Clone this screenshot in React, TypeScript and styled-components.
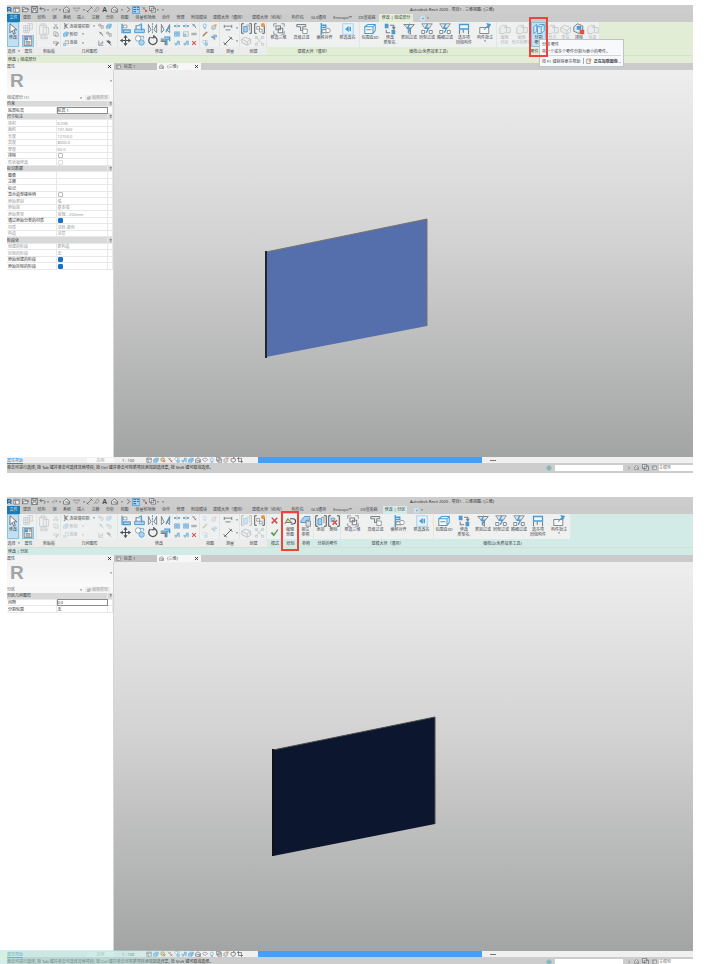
import React, { useId } from "react";
import styled, { createGlobalStyle, css } from "styled-components";

const GlobalStyle = createGlobalStyle`
  * { box-sizing: border-box; }
  body { margin: 0; background: #fff; }
  button, input, select, table {
    font: inherit; color: inherit; margin: 0; padding: 0; border: 0; background: none; border-radius: 0;
  }
`;

const B = "#4b9bd0";
const L = "#a9d3ee";
const G = "#7b7f82";
const D = "#4c5054";
const R = "#e05045";

/* ---------- icons, drawn on a 16 x 16 grid ---------- */

const drawings: Record<string, React.ReactNode> = {
  cursor: <path d="M4 1v12l3-3 2 5 2-1-2-5h4z" fill="#fff" stroke={D} />,
  grid: <path d="M1 4h9v11H1zM4 4v11M7 4v11M1 8h9M1 12h9M7 1h8v9h-5M11 1v9" fill="none" stroke={G} />,
  props: <><path d="M2 1h12v14H2z" fill="#fff" stroke={D} /><path d="M3 2h5v5H3z" fill={B} /><path d="M9 3h4M9 5h4M4 9h8M4 11h8M4 13h8" stroke={D} /></>,
  paste: <path d="M2 3h9v12H2zM4 1h5v3H4zM7 6h7v9H7z" fill="#eee" stroke={G} />,
  cut: <path d="M3 2l9 10M12 2L3 12M2 12h3v3H2zM10 12h3v3h-3z" fill="none" stroke={G} strokeWidth="1.5" />,
  copy: <path d="M2 2h7l2 2v8H2zM6 5h6l2 2v8H6z" fill="#fff" stroke={G} strokeWidth="1.3" />,
  brush: <><path d="M1 4h9v5H1z" fill="#ddd" stroke={G} /><path d="M7 14l7-9 1 2-6 8z" fill="#d1a04e" stroke={D} /></>,
  scissors: <path d="M2 1h3v14H2M5 8l9-6M5 7l9 7M8 3v10" fill="none" stroke={D} strokeWidth="1.6" />,
  cubeBlue: <path d="M1 8l5-5h8v6l-4 5H1zM1 8h9v6M10 8l4-5" fill={L} stroke={B} strokeWidth="1.4" />,
  cubes: <><path d="M1 9h7v6H1z" fill={L} stroke={B} /><path d="M6 2h9v8H9M6 2v5" fill="none" stroke={G} strokeWidth="1.5" /></>,
  dotted: <path d="M2 3h5v5H2zM8 7h6v7H8z" fill="#e7e7e7" stroke={G} strokeWidth="1.4" />,
  hammer: <path d="M2 3l6-1 4 4-3 3zM8 7l6 7" fill={G} stroke={D} strokeWidth="2" />,
  splitface: <><path d="M2 2v12h12" fill="none" stroke={D} strokeWidth="1.5" /><path d="M5 11L13 3v6z" fill="#e8a55e" stroke={B} /></>,
  align: <><path d="M3 1v14" stroke={B} strokeWidth="2" /><path d="M5 3h5v4H5z" fill="#fff" stroke={G} /><path d="M5 10h10v4H5z" fill={L} stroke={B} strokeWidth="1.5" /></>,
  offset: <><path d="M3 9V4h8v5" fill="#fff" stroke={G} strokeWidth="1.5" /><path d="M1 9h14v5H1zM7 3l4-2v10" fill={L} stroke={B} strokeWidth="1.4" /></>,
  mirror: <><path d="M2 2v12l4-4zM14 2v12l-4-4z" fill="#e5eef4" stroke={G} strokeWidth="1.3" /><path d="M8 0v16" stroke={B} strokeDasharray="3 1" strokeWidth="1.3" /></>,
  mirrorDraw: <><path d="M2 2v12l4-4zM14 2v12l-4-4z" fill="#e5eef4" stroke={G} strokeWidth="1.3" /><path d="M8 12l6-9 1 2-6 9z" fill={B} /></>,
  move: <><path d="M8 1v14M1 8h14" stroke={D} strokeWidth="1.6" /><path d="M8 0l3 4H5zM8 16l3-4H5zM0 8l4-3v6zM16 8l-4-3v6z" fill={D} /></>,
  copyBlue: <><circle cx="6" cy="5" r="4" fill="#fff" stroke={G} /><circle cx="11" cy="11" r="4" fill={L} stroke={B} /><path d="M8 2h6v4" fill="none" stroke={B} /></>,
  rotate: <path d="M5 3a6 6 0 1 0 5-1M10 0v4H6" fill="none" stroke={D} strokeWidth="1.8" />,
  trim: <><path d="M1 9h7v6" fill="none" stroke={G} strokeWidth="2.5" /><path d="M1 6h9v9M10 6h5M6 3h8v6" fill="none" stroke={B} strokeWidth="2" /></>,
  split: <><path d="M0 8h6M10 8h6" stroke={B} strokeWidth="4" /><path d="M8 2v12" stroke={D} strokeDasharray="2 1" /></>,
  array: <path d="M1 2h6v5H1zM9 2h6v5H9zM1 9h6v5H1zM9 9h6v5H9z" fill={L} stroke={B} strokeWidth="1.3" />,
  scale: <><path d="M1 2h13v12H1z" fill="none" stroke={G} /><path d="M1 8h7v6H1z" fill={L} stroke={B} /></>,
  trimOne: <><path d="M1 9h8V3h5v11" fill={L} stroke={B} strokeWidth="1.6" /><path d="M2 13h6" stroke={G} strokeWidth="2" /></>,
  pin: <path d="M3 2l4 5M6 3l7 7M5 9l4-5M9 9l5 5" stroke={G} strokeWidth="2" />,
  unpin: <><path d="M3 2l9 9M5 8l4-5" stroke={G} strokeWidth="2" /><path d="M9 9l5 5M14 9l-5 5" stroke={R} strokeWidth="2" /></>,
  link: <path d="M2 6h5v4H2zM9 6h5v4H9z" fill="none" stroke={G} strokeWidth="1.6" />,
  cross: <path d="M2 3l2-1 4 4 4-4 2 2-4 4 4 4-2 2-4-4-4 4-2-2 4-4z" fill={R} />,
  check: <path d="M1 9l3-2 3 3 6-8 2 1-8 12z" fill="#5a9f52" />,
  bulb: <path d="M5 10a4 4 0 1 1 5 0v3H5zM6 15h4" fill="#eaf4fb" stroke={B} strokeWidth="1.5" />,
  pencil: <path d="M2 14l2-5 8-7 2 2-8 8z" fill="#d9a45b" stroke={D} />,
  note: <><path d="M2 3h9v12H2z" fill="#fff" stroke={D} strokeWidth="1.4" /><path d="M6 9l6-8 3 2-6 7z" fill="#e8913f" /></>,
  box: <><path d="M2 6l4-3 6 2v7l-4 3-6-2z" fill="#cfd4d7" stroke={G} /><path d="M9 1h6v5H9z" fill="#e89c62" /></>,
  measure: <path d="M2 3v5M14 3v5M2 5h12M4 11h8" fill="none" stroke={G} strokeWidth="1.5" />,
  diag: <path d="M2 14L14 2M1 10l5 5M10 1l5 5" fill="none" stroke={D} strokeWidth="1.4" />,
  brackets: <><path d="M4 1H1v14h3M12 1h3v14h-3" fill="none" stroke={D} strokeWidth="1.3" /><path d="M4 5h5v8H4z" fill={L} stroke={B} strokeWidth="1.3" /><path d="M8 3h4v8" fill="none" stroke={G} /></>,
  bracketsNew: <><path d="M4 1H1v14h3M12 4h3v11h-3" fill="none" stroke={D} strokeWidth="1.3" /><path d="M4 5h4v4H4zM8 9h4v4H8z" fill="#fff" stroke={G} /><circle cx="13" cy="3" r="3" fill="#e9974c" /></>,
  bracketsDel: <><path d="M4 1H1v14h3M12 1h3v14h-3" fill="none" stroke={D} strokeWidth="1.3" /><path d="M4 4h5v5H4z" fill={L} stroke={B} /><path d="M6 7l6 6M12 7l-6 6" stroke={R} strokeWidth="2" /></>,
  solid: <path d="M1 6l5-3 8 3v6l-5 3-8-4zM1 6l8 4 5-4M9 10v5" fill="#e6e6e6" stroke={G} strokeWidth="1.3" />,
  nodes: <path d="M3 3l9 10M12 3L3 13M2 2h3v3H2zM11 2h3v3h-3zM2 12h3v3H2zM11 12h3v3h-3z" fill="#eee" stroke={G} />,
  frame3d: <><path d="M1 5V1h4M11 1h4v4M15 11v4h-4M5 15H1v-4" fill="none" stroke={G} /><path d="M4 4h6v5H4zM7 7h6v6H7z" fill="#fff" stroke={G} strokeWidth="1.4" /></>,
  filter: <><path d="M1 2h12v3H9v5H6V5H1z" fill="#dce7ee" stroke={G} strokeWidth="1.3" /><path d="M9 8h6v6H9z" fill="#fff" stroke={G} /></>,
  offsetAlign: <><path d="M3 0v16M4 3h5v3H4" fill="none" stroke={B} strokeWidth="1.8" /><path d="M4 9h7v4H4z" fill="#fff" stroke={G} strokeWidth="1.3" /><circle cx="12" cy="10" r="3" fill="#fff" stroke={G} /></>,
  rename: <><path d="M1 1h14v14H1z" fill="#e7f3fb" stroke={L} strokeWidth="1.4" /><path d="M4 8l5-4v8zM10 5h2v6h-2" fill={B} /></>,
  bbox: <path d="M1 5l4-3h10v8l-3 4H1zM1 5h11v9M12 5l3-3M3 9h7" fill="#f5fafd" stroke={B} strokeWidth="1.4" />,
  edit: <><path d="M1 1h5v6H1zM10 9h5v6h-5z" fill={B} /><path d="M8 3h5v4M11 5l2 3 2-3M3 9v4h5" fill="none" stroke={G} strokeWidth="1.4" /></>,
  funnel: <><path d="M1 2h14l-5 6v7l-3-2V8z" fill="#e1e6e9" stroke={G} strokeWidth="1.2" /><path d="M9 1L6 7h4l-3 6" fill="none" stroke={B} strokeWidth="1.8" /></>,
  funnelMulti: <><path d="M1 1h14l-4 6H5z" fill="#dfe5e9" stroke={G} /><path d="M9 1L6 7h4l-3 6" fill="none" stroke={B} strokeWidth="1.8" /><path d="M1 10h4v4H1zM11 10h4v4h-4z" fill="#fff" stroke={G} strokeWidth="1.2" /></>,
  multi: <><path d="M2 9v6M14 9v6M7 9v4" stroke={G} strokeWidth="1.5" /><path d="M2 2h12v6H2z" fill="#eef7fd" stroke={B} strokeWidth="1.7" /></>,
  annotate: <><path d="M1 6h12v8H1z" fill="#f8f8f8" stroke={G} strokeWidth="1.2" /><path d="M7 9l6-7M11 1l4 1-2 4z" fill={B} stroke={B} strokeWidth="1.5" /></>,
  parts: <path d="M1 5l4-3v9l-4 3zM6 5h5v9H6zM6 5l3-3h6v8l-4 4M11 5l4-3" fill="#dcebf4" stroke={B} strokeWidth="1.2" />,
  partsGray: <path d="M1 6l4-3h5v8l-3 3H1zM7 6h8v7H9M7 6l3-3" fill="#e5e5e5" stroke={G} strokeWidth="1.2" />,
  partsRed: <><path d="M1 5l5-4 7 3v6l-5 4-7-3z" fill="#dde9ef" stroke={G} strokeWidth="1.3" /><path d="M5 4h6v5H5z" fill={B} /><path d="M9 9h6v6H9z" fill={R} /></>,
  sketch: <><path d="M1 12l4-7 5 5H3" fill="#f4d488" stroke={G} strokeWidth="1.4" /><path d="M8 5h4a3 3 0 0 1 0 7H9" fill="none" stroke={D} strokeWidth="1.5" /></>,
  intersect: <><path d="M1 8l5-6h7v5H8v3H1z" fill={L} stroke={B} strokeWidth="1.3" /><path d="M8 8h6v7H8z" fill="#ddd" stroke={G} /></>,
  doc: <path d="M2 3h12v11H2zM2 6h12M6 6v8" fill="#fff" stroke={D} strokeWidth="1.4" />,
  open: <path d="M1 13V3h5l1 2h6v3M1 13l3-6h11l-3 6z" fill="#eee" stroke={D} strokeWidth="1.4" />,
  save: <path d="M1 1h14v14H1zM4 1v5h8V1M4 15V9h8v6" fill="#f3f3f3" stroke={D} strokeWidth="1.5" />,
  undo: <path d="M5 2L2 6l4 3M2 6h8c5 0 5 6 1 7" fill="none" stroke={D} strokeWidth="1.6" />,
  redo: <path d="M11 4l3 3-4 3M14 7H6c-4 0-4 5 0 5" fill="none" stroke={G} strokeWidth="1.2" />,
  home: <path d="M1 7l7-5 7 5v7H1zM4 9h8v5" fill="#eee" stroke={D} strokeWidth="1.5" />,
  tag: <path d="M2 14L10 2l4 3-4 7-5-1" fill="none" stroke={G} strokeWidth="1.3" />,
  section: <path d="M5 2l6 6-6 6" fill="none" stroke={D} strokeWidth="1.7" />,
  lines: <path d="M1 3h6M1 8h6M1 13h6M9 3h6M9 8h4" stroke="#28598a" strokeWidth="2" />,
  windows: <path d="M1 1h10v9H1zM5 5h10v9H5z" fill="#eee" stroke={D} strokeWidth="1.4" />,
  globe: <><circle cx="8" cy="8" r="6" fill={L} stroke={B} /><path d="M8 2v12M2 8h12" stroke="#6ca665" strokeWidth="2" /></>,
  sun: <><circle cx="7" cy="7" r="5" fill="#f2d37f" stroke={D} /><path d="M9 9l5 5M14 9l-5 5" stroke={R} strokeWidth="2" /></>,
  crop: <path d="M4 0v12h12M0 4h12v12" fill="none" stroke={D} strokeWidth="1.6" />,
  glasses: <path d="M1 7c3-5 11-5 14 0l-7 5z" fill="none" stroke={G} strokeWidth="1.6" />,
};

const Glyph = styled.svg<{ $s: number }>`
  width: ${(p) => p.$s}px;
  height: ${(p) => p.$s}px;
  flex: none;
  display: block;
`;

const Icon = ({ name, size = 6 }: { name: string; size?: number }) => (
  <Glyph $s={size} viewBox="0 0 16 16" aria-hidden="true">{drawings[name]}</Glyph>
);

const Caret = () => (
  <Glyph $s={2} viewBox="0 0 8 8" aria-hidden="true"><path d="M0 2h8L4 7z" fill={D} /></Glyph>
);

/* ---------- window shell ---------- */

const Page = styled.main`
  height: 100vh;
  overflow: hidden;
  padding: 5px 14px 0 7px;
  display: flex;
  flex-direction: column;
  gap: 24px;
  font: 4px/5px "Noto Sans", "Noto Sans CJK SC", sans-serif;
  color: #43474a;
`;

const AppWindow = styled.section`
  flex: none;
  position: relative;
`;

const TitleBar = styled.header`
  display: flex;
  height: 9px;
  background: #cdcdcd;
  align-items: center;
`;

const QuickButton = styled.button<{ $w: number; $on?: boolean }>`
  width: ${(p) => p.$w}px;
  height: 8px;
  flex: none;
  display: flex;
  align-items: center;
  justify-content: center;
  font-size: 7px;
  line-height: 8px;
  font-weight: 600;
  ${(p) => p.$on && css`background: #a9d1f0; outline: 1px solid #6aa9d8; outline-offset: -1px;`}
`;

const WindowTitle = styled.span`
  margin-left: 245px;
  white-space: nowrap;
  color: #333;
`;

const TabRow = styled.nav`
  display: flex;
  height: 8px;
  background: #cbcbcb;
`;

const RibbonTab = styled.button<{ $w: number; $bg?: string; $file?: boolean }>`
  width: ${(p) => p.$w}px;
  flex: none;
  white-space: nowrap;
  text-align: center;
  line-height: 8px;
  background: ${(p) => (p.$file ? "#1a7ab8" : p.$bg || "transparent")};
  color: ${(p) => (p.$file ? "#d9edf8" : "#43474a")};
  display: flex;
  align-items: center;
  justify-content: center;
  gap: 2px;
`;

const Ribbon = styled.div<{ $tint: string }>`
  display: flex;
  height: 33px;
  background: ${(p) => p.$tint};
`;

const GroupBox = styled.section<{ $w: number }>`
  width: ${(p) => p.$w}px;
  flex: none;
  display: flex;
  flex-direction: column;
  position: relative;
`;

const Tools = styled.div`
  height: 25px;
  display: flex;
  background: #eff1f1;
  border-right: 1px solid #e2e5e5;
`;

const GroupLabel = styled.div<{ $tint?: string; $right?: number }>`
  height: 8px;
  line-height: 7px;
  display: flex;
  align-items: center;
  justify-content: center;
  gap: 2px;
  white-space: nowrap;
  padding-right: ${(p) => p.$right || 0}px;
  background: ${(p) => p.$tint || "#ececec"};
`;

const ToolButton = styled.button<{ $w: number; $dim?: boolean; $on?: boolean }>`
  width: ${(p) => p.$w}px;
  height: 25px;
  flex: none;
  position: relative;
  display: flex;
  flex-direction: column;
  align-items: center;
  padding-top: 1px;
  line-height: 5px;
  white-space: nowrap;
  ${(p) => p.$on && css`background: #c0e0f3; outline: 1px solid #8dc1e2; outline-offset: -1px;`}
  > svg, > span { opacity: ${(p) => (p.$dim ? 0.35 : 1)}; }
`;

const Column = styled.div<{ $w: number }>`
  width: ${(p) => p.$w}px;
  flex: none;
  display: flex;
  flex-direction: column;
  justify-content: space-around;
  align-items: center;
`;

const SmallButton = styled.button<{ $dim?: boolean; $on?: boolean }>`
  display: flex;
  align-items: center;
  gap: 1px;
  white-space: nowrap;
  opacity: ${(p) => (p.$dim ? 0.4 : 1)};
  ${(p) => p.$on && css`background: #c0e0f3; outline: 1px solid #8dc1e2;`}
`;

const SmallText = styled.span<{ $w: number }>`
  width: ${(p) => p.$w}px;
  text-align: left;
`;

const RedFrame = styled.span<{ $top: number }>`
  position: absolute;
  z-index: 5;
  top: ${(p) => p.$top}px;
  left: -2px;
  right: -2px;
  height: 40px;
  border: 2px solid #f04238;
`;

const Tooltip = styled.div`
  position: absolute;
  z-index: 4;
  left: 42px;
  top: 17px;
  width: 85px;
  height: 28px;
  padding: 2px;
  background: #f8f9fb;
  border: 1px solid #bfc3c9;
  white-space: nowrap;
  display: flex;
  flex-direction: column;
  justify-content: space-between;
`;

const TooltipFoot = styled.div`
  display: flex;
  align-items: center;
  gap: 2px;
  border-top: 1px solid #d3d5da;
  padding-top: 2px;
`;

const TooltipNote = styled.span`
  border-left: 1px solid #aaa;
  margin-left: auto;
  padding-left: 2px;
  display: flex;
  align-items: center;
  gap: 2px;
  font-weight: 600;
`;

const OptionsBar = styled.div<{ $tint: string }>`
  height: 8px;
  line-height: 7px;
  padding-left: 1px;
  background: ${(p) => p.$tint};
  border-top: 1px solid #d5dfd2;
  color: #333;
`;

/* ---------- body ---------- */

const Body = styled.div<{ $h: number }>`
  display: grid;
  grid-template-columns: 107px 1fr;
  grid-template-rows: 7px ${(p) => p.$h}px 6px;
`;

const PanelTitle = styled.div`
  display: flex;
  justify-content: space-between;
  align-items: center;
  background: #f3f3f3;
  padding-right: 2px;
`;

const CloseButton = styled.button`
  width: 5px;
  height: 5px;
`;

const DocTabs = styled.nav`
  display: flex;
  background: #cbcbcb;
`;

const DocTab = styled.button<{ $w: number; $active?: boolean }>`
  width: ${(p) => p.$w}px;
  display: flex;
  align-items: center;
  gap: 3px;
  padding: 0 2px;
  line-height: 7px;
  background: ${(p) => (p.$active ? "#f7f7f7" : "#c2c2c2")};
`;

const TabCloser = styled.span`
  margin-left: auto;
`;

const Panel = styled.aside`
  background: #fff;
  overflow: hidden;
  border-right: 1px solid #d6d6d6;
`;

const TypeBox = styled.div`
  height: 24px;
  display: flex;
  align-items: center;
  justify-content: space-between;
  padding: 0 1px 3px 3px;
  background: linear-gradient(#f2f2f2, #fafafa);
`;

const RevitLogo = styled.span`
  font: 700 19px/21px "Liberation Sans", sans-serif;
  color: #a2a4a6;
`;

const TypeRow = styled.div`
  height: 7px;
  display: flex;
  align-items: center;
  justify-content: space-between;
  padding-right: 3px;
  background: #f8f8f8;
  color: #65696c;
`;

const TypeSelect = styled.select`
  flex: 1;
  min-width: 0;
  height: 6px;
  appearance: none;
`;

const EditType = styled.button`
  display: flex;
  align-items: center;
  gap: 1px;
  margin-left: 3px;
  color: #a5a7a9;
  background: #ededed;
  padding: 0 2px;
`;

const PropTable = styled.table<{ $h: number }>`
  width: 106px;
  height: ${(p) => p.$h}px;
  table-layout: fixed;
  border-collapse: collapse;
  line-height: 5px;
  td, th { padding: 0 0 0 1px; text-align: left; font-weight: 400; border-bottom: 1px solid #e8e8e8; border-right: 1px solid #e8e8e8; white-space: nowrap; }
`;

const NameCol = styled.col`width: 49px;`;
const EndCol = styled.col`width: 5px;`;

const PropRow = styled.tr<{ $kind?: string }>`
  color: ${(p) => (p.$kind === "dim" ? "#94979a" : "#2f3336")};
  ${(p) => p.$kind === "head" && css`
    background: #d9d9d9;
    th { padding-left: 0; }
  `}
`;

const ValueInput = styled.input`
  display: block;
  width: 100%;
  height: 5px;
  outline: 1px solid #8b8b8b;
`;

const Tick = styled.input`
  appearance: none;
  display: block;
  width: 5px;
  height: 5px;
  background: #fff;
  border: 1px solid #bbb;
  border-radius: 1px;
  &:checked { background: #1673c4; border-color: #1673c4; }
  &:disabled { border-color: #ddd; }
`;

const Viewport = styled.div`
  background: linear-gradient(#eeeeee, #d2d2d2 45%, #a3a4a4);
  overflow: hidden;
`;

const Scene = styled.svg`
  display: block;
  width: 100%;
  height: auto;
`;

const PanelFoot = styled.div`
  display: flex;
  justify-content: space-between;
  align-items: center;
  background: #f0f0f0;
`;

const HelpLink = styled.a`
  color: #2f86cf;
`;

const ApplyButton = styled.button`
  width: 27px;
  background: #fafafa;
  color: #a5a5a5;
`;

const ViewBar = styled.div`
  display: flex;
  align-items: center;
  gap: 1px;
  background: #f0f0f0;
`;

const ViewScale = styled.span`
  width: 31px;
  padding-left: 8px;
  white-space: nowrap;
`;

const ScrollThumb = styled.div`
  width: 224px;
  height: 6px;
  margin-left: 14px;
  background: #459ff8;
`;

const ScrollMark = styled.div`
  width: 6px;
  height: 1px;
  margin-left: 7px;
  background: #777;
`;

const StatusBar = styled.footer`
  height: 10px;
  display: flex;
  align-items: center;
  background: #cdcdcd;
  padding-bottom: 1px;
`;

const StatusText = styled.span`
  flex: 1;
  white-space: nowrap;
  color: #222;
`;

const StatusInput = styled.input`
  width: 68px;
  height: 6px;
  margin: 0 4px 0 3px;
  background: #fff;
`;

const StatusIcons = styled.div`
  display: flex;
  align-items: center;
  gap: 3px;
`;

const ModelSelect = styled.select`
  width: 34px;
  height: 6px;
  margin-left: 2px;
  background: #fff;
  appearance: none;
  color: #777;
`;

const Haze = styled.div`
  position: absolute;
  left: -7px;
  bottom: 0;
  width: 200px;
  height: 17px;
  pointer-events: none;
  background: linear-gradient(90deg, rgba(170, 222, 214, 0.5) 60%, rgba(170, 222, 214, 0));
`;

/* ---------- pieces ---------- */

const Closer = () => (
  <Glyph $s={5} viewBox="0 0 16 16" aria-hidden="true"><path d="M3 3l10 10M13 3L3 13" stroke="#222" strokeWidth="2.6" /></Glyph>
);

const quick: [string, number][] = [
  ["doc", 9], ["open", 9], ["save", 8], ["undo", 8], ["", 4], ["redo", 8], ["", 4], ["home", 9], ["measure", 11], ["", 4],
  ["diag", 7], ["tag", 7], ["A", 9], ["home", 11], ["", 4], ["section", 8], ["lines", 8], ["unpin", 8], ["windows", 8], ["", 4], ["", 5],
];

const tabs: [string, number][] = [
  ["文件", 13], ["建筑", 14], ["结构", 15], ["钢", 11], ["系统", 14], ["插入", 14], ["注释", 15], ["分析", 14], ["视图", 15],
  ["体量和场地", 27], ["协作", 14], ["管理", 15], ["附加模块", 22], ["建模大师（通用）", 38], ["建模大师（机电）", 40],
  ["构件坞", 19], ["GLS通用", 23], ["Enscape™", 25],
];

const Group = ({ label, w, tint, caret, right, children }: {
  label: string; w: number; tint?: string; caret?: boolean; right?: number; children: React.ReactNode;
}) => (
  <GroupBox $w={w}>
    <Tools>{children}</Tools>
    <GroupLabel $tint={tint} $right={right}>{label}{caret && <Caret />}</GroupLabel>
  </GroupBox>
);

const Tool = ({ icon, w, text = [], dim, on, size = 12, children }: {
  icon: string; w: number; text?: string[]; dim?: boolean; on?: boolean; size?: number; children?: React.ReactNode;
}) => (
  <ToolButton $w={w} $dim={dim} $on={on} aria-label={text.join("") || icon}>
    <Icon name={icon} size={size} />
    {text.map((t) => <span key={t}>{t}</span>)}
    {children}
  </ToolButton>
);

const Icons = ({ w, names, size = 6, dim }: { w: number; names: string[]; size?: number; dim?: boolean }) => (
  <Column $w={w}>
    {names.map((n, i) => <SmallButton key={i} $dim={dim} aria-label={n}><Icon name={n} size={size} /></SmallButton>)}
  </Column>
);

const CommonGroups = ({ editing }: { editing: boolean }) => (
  <>
    <Group label="选择" w={13} caret>
      <Tool icon="cursor" w={12} text={["修改"]} on />
    </Group>
    <Group label="属性" w={17}>
      <Column $w={16}>
        <SmallButton $dim aria-label="类型属性"><Icon name="grid" size={10} /></SmallButton>
        <SmallButton $on aria-label="属性"><Icon name="props" size={10} /></SmallButton>
      </Column>
    </Group>
    <Group label="剪贴板" w={24}>
      <Tool icon="paste" w={14} text={["粘贴"]} dim />
      <Icons w={9} names={["cut", "copy", "brush"]} dim={editing} />
    </Group>
    <Group label="几何图形" w={57}>
      <Column $w={35}>
        <SmallButton><Icon name="scissors" /><SmallText $w={22}>连接端切割</SmallText><Caret /></SmallButton>
        <SmallButton $dim={editing}><Icon name="cubeBlue" /><SmallText $w={11}>剪切</SmallText><Caret /><SmallText $w={10} /></SmallButton>
        <SmallButton $dim={editing}><Icon name="cubes" /><SmallText $w={11}>连接</SmallText><Caret /><SmallText $w={10} /></SmallButton>
      </Column>
      <Icons w={9} names={["dotted", "pin", "splitface"]} dim={editing} />
      <Icons w={8} names={["cubeBlue", "dotted", "hammer"]} dim={editing} />
    </Group>
    <Group label="修改" w={82}>
      <Icons w={15} size={11} names={["align", "move"]} />
      <Icons w={13} size={11} names={["offset", "copyBlue"]} />
      <Icons w={13} size={11} names={["mirror", "rotate"]} />
      <Icons w={13} size={11} names={["mirrorDraw", "trim"]} />
      <Icons w={10} names={["split", "array", "trimOne"]} />
      <Icons w={8} names={["split", editing ? "array" : "scale", "trimOne"]} />
      <Icons w={8} names={[editing ? "unpin" : "pin", "link", "cross"]} />
    </Group>
    <Group label="视图" w={20}>
      <Icons w={9} names={["bulb", "pencil", "copyBlue"]} dim={editing} />
      <Column $w={10}>
        <SmallButton $dim={editing} aria-label="替换"><Icon name="box" /></SmallButton>
        <SmallButton $dim={editing} aria-label="线处理"><Icon name="trim" /></SmallButton>
        <SmallText $w={6} />
      </Column>
    </Group>
    <Group label="测量" w={20}>
      <Icons w={15} size={10} names={["measure", "diag"]} />
      <Column $w={4}><Caret /><Caret /></Column>
    </Group>
    <Group label="创建" w={27}>
      <Column $w={13}>
        <SmallButton $dim={editing} aria-label="创建部件"><Icon name="brackets" size={11} /></SmallButton>
        <SmallButton $dim aria-label="创建零件"><Icon name="solid" size={11} /></SmallButton>
      </Column>
      <Column $w={13}>
        <SmallButton aria-label="创建组"><Icon name="bracketsNew" size={11} /></SmallButton>
        <SmallButton $dim aria-label="创建类似"><Icon name="nodes" size={11} /></SmallButton>
      </Column>
    </Group>
  </>
);

const AddinGroups = ({ tint }: { tint: string }) => (
  <>
    <Group label="建模大师（通用）" w={93} tint={tint}>
      <Tool icon="frame3d" w={23} text={["框选三维"]} />
      <Tool icon="filter" w={23} text={["高级过滤"]} />
      <Tool icon="offsetAlign" w={23} text={["偏移对齐"]} />
      <Tool icon="rename" w={23} text={["框选改名"]} />
    </Group>
    <Group label="橄榄山(免费效率工具)" w={137} tint={tint}>
      <Tool icon="bbox" w={20} text={["包围盒3D"]} />
      <Tool icon="edit" w={20} text={["修改", "类型名."]} />
      <Tool icon="funnel" w={18} text={["类别过滤"]} />
      <Tool icon="funnelMulti" w={18} text={["同型过滤"]} />
      <Tool icon="funnelMulti" w={18} text={["精细过滤"]} />
      <Tool icon="multi" w={20} text={["选多项", "同组构件"]} />
      <Tool icon="annotate" w={22} text={["构件批注"]}><Caret /></Tool>
    </Group>
  </>
);

type Row = { name: string; value?: string; kind?: "head" | "dim" | "box"; tick?: boolean };

const PropertyRow = ({ row }: { row: Row }) => {
  const id = useId();
  if (row.kind === "head") {
    return <PropRow $kind="head"><th colSpan={2} scope="colgroup">{row.name}</th><td>⇑</td></PropRow>;
  }
  let cell: React.ReactNode = row.value;
  if (row.tick !== undefined) cell = <Tick id={id} type="checkbox" defaultChecked={row.tick} disabled={row.kind === "dim"} />;
  if (row.kind === "box") cell = <ValueInput id={id} defaultValue={row.value} />;
  const tied = row.tick !== undefined || row.kind === "box";
  return (
    <PropRow $kind={row.kind}>
      <th scope="row">{tied ? <label htmlFor={id}>{row.name}</label> : row.name}</th>
      <td>{cell}</td>
      <td />
    </PropRow>
  );
};

const partRows: Row[] = [
  { name: "约束", kind: "head" },
  { name: "底部标高", value: "标高 1", kind: "box" },
  { name: "尺寸标注", kind: "head" },
  { name: "体积", value: "6.096", kind: "dim" },
  { name: "面积", value: "101.600", kind: "dim" },
  { name: "长度", value: "12700.0", kind: "dim" },
  { name: "高度", value: "8000.0", kind: "dim" },
  { name: "厚度", value: "60.0", kind: "dim" },
  { name: "排除", tick: false },
  { name: "形状被修改", tick: false, kind: "dim" },
  { name: "标识数据", kind: "head" },
  { name: "图像" },
  { name: "注释" },
  { name: "标记" },
  { name: "显示造型操纵柄", tick: false },
  { name: "原始类别", value: "墙", kind: "dim" },
  { name: "原始族", value: "基本墙", kind: "dim" },
  { name: "原始类型", value: "常规 - 200mm", kind: "dim" },
  { name: "通过原始分类的材质", tick: true },
  { name: "材质", value: "涂料-蓝色", kind: "dim" },
  { name: "构造", value: "涂层", kind: "dim" },
  { name: "阶段化", kind: "head" },
  { name: "创建的阶段", value: "新构造", kind: "dim" },
  { name: "拆除的阶段", value: "无", kind: "dim" },
  { name: "原始创建的阶段", tick: true },
  { name: "原始拆除的阶段", tick: true },
];

const divisionRows: Row[] = [
  { name: "分区几何图形", kind: "head" },
  { name: "间隙", value: "0.0", kind: "box" },
  { name: "分割轮廓", value: "无" },
];

const viewIcons = ["doc", "cubeBlue", "sun", "unpin", "copyBlue", "trimOne", "cubeBlue", "home", "glasses", "bulb", "windows", "box", "rotate", "crop"];

type ShellProps = {
  tint: string; activeTab: string; activeWidth: number; lastWidth: number; option: string;
  type: string; rows: Row[]; tableHeight: number; bodyHeight: number;
  ribbon: React.ReactNode; wall: React.ReactNode; children?: React.ReactNode;
};

const Shell = (p: ShellProps) => (
  <AppWindow>
    <TitleBar>
      <QuickButton $w={5} aria-label="Revit"><Glyph $s={5} viewBox="0 0 16 16"><path d="M2 15V2h7a4 4 0 0 1 0 8H4M9 10l5 5" fill="none" stroke="#1b6fb0" strokeWidth="4" /></Glyph></QuickButton>
      {quick.map(([n, w], i) => (
        <QuickButton key={i} $w={w} $on={n === "lines"} aria-label={n || "更多"}>
          {n === "" ? <Caret /> : n === "A" ? "A" : <Icon name={n} size={7} />}
        </QuickButton>
      ))}
      <WindowTitle>Autodesk Revit 2020 - 项目1 - 三维视图: {"{三维}"}</WindowTitle>
    </TitleBar>
    <TabRow>
      {tabs.map(([t, w], i) => <RibbonTab key={t} $w={w} $file={i === 0}>{t}</RibbonTab>)}
      <RibbonTab $w={p.lastWidth}>DS渲染器</RibbonTab>
      <RibbonTab $w={p.activeWidth} $bg={p.tint}>{p.activeTab}</RibbonTab>
      <RibbonTab $w={22} aria-label="显示"><Icon name="rename" size={5} /><Caret /></RibbonTab>
    </TabRow>
    <Ribbon $tint={p.tint}>{p.ribbon}</Ribbon>
    <OptionsBar $tint={p.tint}>{p.option}</OptionsBar>
    <Body $h={p.bodyHeight}>
      <PanelTitle><span>属性</span><CloseButton aria-label="关闭"><Closer /></CloseButton></PanelTitle>
      <DocTabs>
        <DocTab $w={43}><Icon name="doc" size={5} />标高 1</DocTab>
        <DocTab $w={44} $active><Icon name="home" size={5} />{"{三维}"}<TabCloser><Closer /></TabCloser></DocTab>
      </DocTabs>
      <Panel>
        <TypeBox><RevitLogo>R</RevitLogo><Caret /></TypeBox>
        <TypeRow>
          <TypeSelect aria-label="类型"><option>{p.type}</option></TypeSelect>
          <Caret />
          <EditType><Icon name="grid" size={4} />编辑类型</EditType>
        </TypeRow>
        <PropTable $h={p.tableHeight}>
          <colgroup><NameCol /><col /><EndCol /></colgroup>
          <tbody>{p.rows.map((r) => <PropertyRow key={r.name} row={r} />)}</tbody>
        </PropTable>
      </Panel>
      <Viewport>{p.wall}</Viewport>
      <PanelFoot><HelpLink href="#help">属性帮助</HelpLink><ApplyButton>应用</ApplyButton></PanelFoot>
      <ViewBar>
        <ViewScale>1 : 100</ViewScale>
        {viewIcons.map((n, i) => <Icon key={i} name={n} size={6} />)}
        <ScrollThumb />
        <ScrollMark />
      </ViewBar>
    </Body>
    <StatusBar>
      <StatusText>单击可进行选择; 按 Tab 键并单击可选择其他项目; 按 Ctrl 键并单击可将新项目添加到选择集; 按 Shift 键可取消选择。</StatusText>
      <Icon name="globe" />
      <StatusInput aria-label="工作集" />
      <StatusIcons><Icon name="section" size={4} /><Icon name="home" size={5} /><Icon name="windows" size={7} /><Icon name="doc" size={5} /></StatusIcons>
      <ModelSelect aria-label="设计选项"><option>主模型</option></ModelSelect>
    </StatusBar>
    {p.children}
  </AppWindow>
);

const GREEN = "#e2edd6";
const TEAL = "#d3ebe7";

const PartsRibbon = () => (
  <>
    <CommonGroups editing={false} />
    <AddinGroups tint={GREEN} />
    <GroupBox $w={103}>
      <Tools>
        <Tool icon="partsGray" w={15} text={["编辑", "分区"]} dim />
        <Tool icon="partsGray" w={19} text={["编辑", "合并的零件"]} dim />
        <Tool icon="parts" w={15} text={["分割", "零件"]} on><RedFrame $top={-5} /></Tool>
        <Tool icon="partsGray" w={13} text={["合并"]} dim />
        <Tool icon="solid" w={13} text={["重设"]} dim />
        <Tool icon="partsRed" w={14} text={["排除"]} />
        <Tool icon="partsGray" w={13} text={["恢复"]} dim />
      </Tools>
      <GroupLabel $tint={GREEN} $right={28}>零件</GroupLabel>
      <Tooltip role="tooltip">
        <span>分割 零件</span>
        <span>将一个或多个零件分割为更小的零件。</span>
        <TooltipFoot>按 F1 键获得更多帮助<TooltipNote><Icon name="note" />正在加载图像...</TooltipNote></TooltipFoot>
      </Tooltip>
    </GroupBox>
  </>
);

const DivisionRibbon = () => (
  <>
    <CommonGroups editing />
    <Group label="模式" w={16} tint={TEAL}>
      <Icons w={15} size={9} names={["cross", "check"]} />
    </Group>
    <Group label="绘制" w={15} tint={TEAL}>
      <Tool icon="sketch" w={14} text={["编辑", "草图"]}><RedFrame $top={-3} /></Tool>
    </Group>
    <Group label="参照" w={16} tint={TEAL}>
      <Tool icon="intersect" w={15} text={["相交", "参照"]} />
    </Group>
    <Group label="分割的零件" w={27} tint={TEAL}>
      <Tool icon="brackets" w={13} text={["添加"]} />
      <Tool icon="bracketsDel" w={13} text={["删除"]} />
    </Group>
    <AddinGroups tint={TEAL} />
  </>
);

const App = () => (
  <>
    <GlobalStyle />
    <Page>
      <Shell
        tint={GREEN} activeTab="修改 | 组成部分" activeWidth={34} lastWidth={24} option="修改 | 组成部分"
        type="组成部分 (1)" rows={partRows} tableHeight={169} bodyHeight={387}
        ribbon={<PartsRibbon />}
        wall={
          <Scene viewBox="0 0 579 387" role="img" aria-label="三维视图">
            <path d="M152 182L313 149V256L152 287z" fill="#546fac" />
            <path d="M152 182L313 149V256" fill="none" stroke="#77756a" />
            <path d="M152 181V288" stroke="#22252c" strokeWidth="2" />
          </Scene>
        }
      />
      <Shell
        tint={TEAL} activeTab="修改 | 分区" activeWidth={24} lastWidth={28} option="修改 | 分区"
        type="分区" rows={divisionRows} tableHeight={20} bodyHeight={389}
        ribbon={<DivisionRibbon />}
        wall={
          <Scene viewBox="0 0 579 389" role="img" aria-label="三维视图">
            <path d="M159 188L321 155V262L159 294z" fill="#0c162e" />
            <path d="M159 188L321 155V262" fill="none" stroke="#4c4c47" />
            <path d="M159 187V294" stroke="#111216" strokeWidth="2" />
          </Scene>
        }
      >
        <Haze />
      </Shell>
    </Page>
  </>
);

export default App;
